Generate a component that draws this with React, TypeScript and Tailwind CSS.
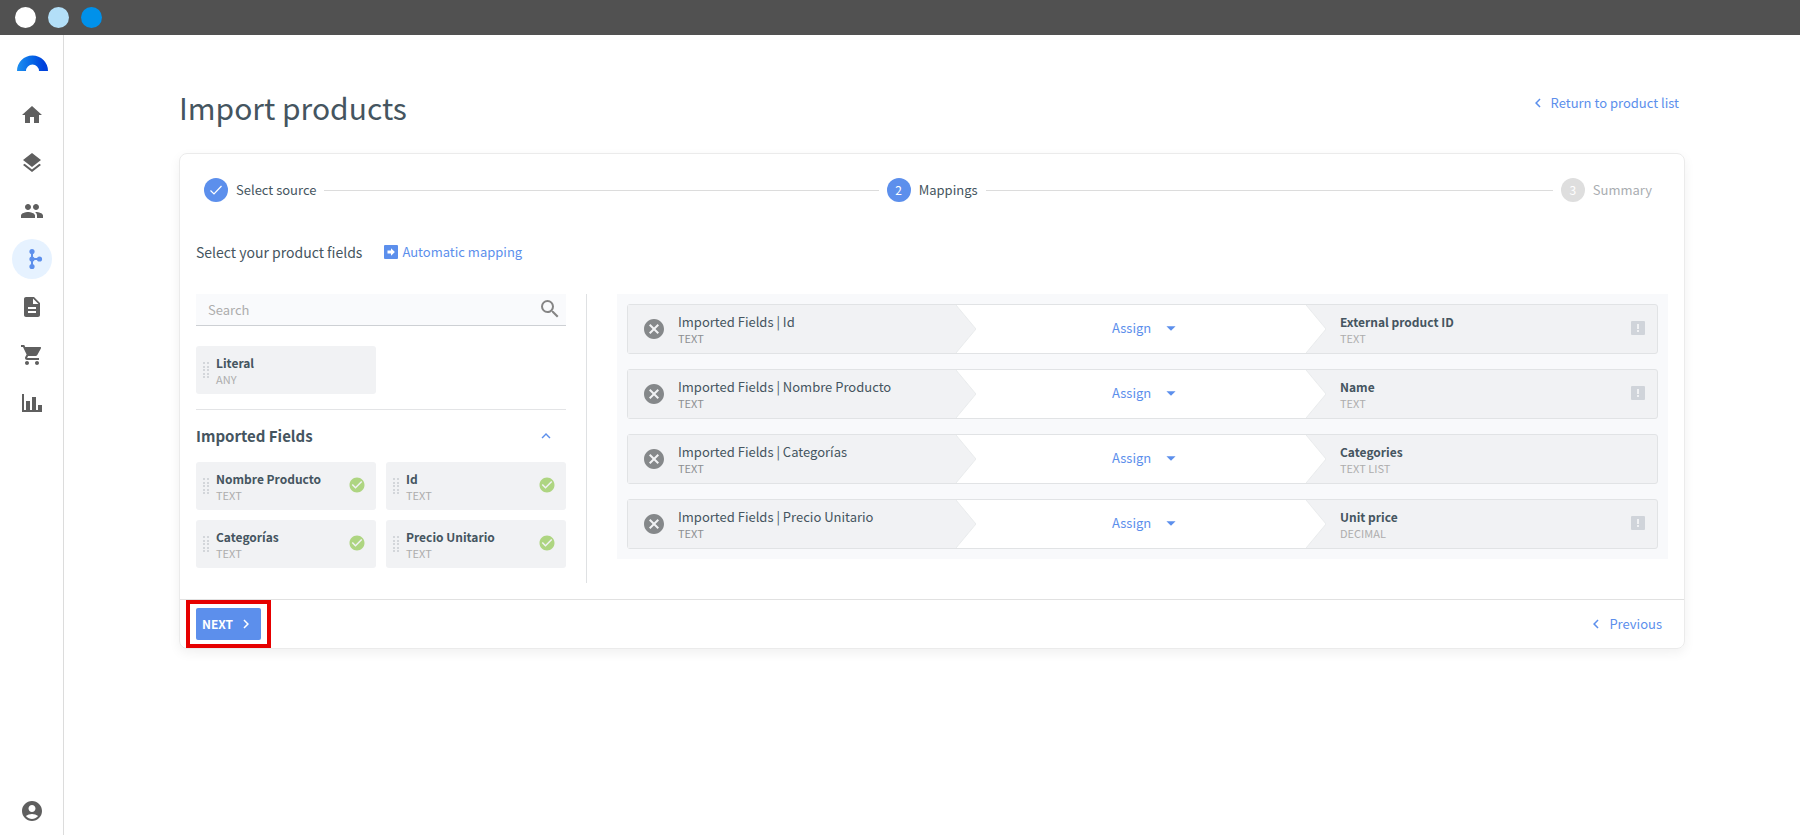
import React from "react";
import {
  MdAccountCircle,
  MdArrowDropDown,
  MdCancel,
  MdCheckCircle,
  MdChevronLeft,
  MdChevronRight,
  MdDescription,
  MdHome,
  MdKeyboardArrowUp,
  MdLayers,
  MdPeople,
  MdSearch,
  MdShoppingCart,
} from "react-icons/md";

type Field = { name: string; type: string; mapped?: boolean };
type Mapping = { source: string; target: string; type: string; required: boolean };

const importedFields: Field[] = [
  { name: "Nombre Producto", type: "TEXT", mapped: true },
  { name: "Id", type: "TEXT", mapped: true },
  { name: "Categorías", type: "TEXT", mapped: true },
  { name: "Precio Unitario", type: "TEXT", mapped: true },
];

const mappings: Mapping[] = [
  { source: "Id", target: "External product ID", type: "TEXT", required: true },
  { source: "Nombre Producto", target: "Name", type: "TEXT", required: true },
  { source: "Categorías", target: "Categories", type: "TEXT LIST", required: false },
  { source: "Precio Unitario", target: "Unit price", type: "DECIMAL", required: true },
];

function Logo() {
  return (
    <svg width="32" height="16" viewBox="0 0 32 16" aria-hidden="true">
      <defs>
        <linearGradient id="arc" x1="0" x2="1" y1="0" y2="0">
          <stop offset="0" stopColor="#1e90f0" />
          <stop offset="0.5" stopColor="#0565e6" />
          <stop offset="0.85" stopColor="#0042dc" />
        </linearGradient>
      </defs>
      <path d="M1 16a15.500 15.500 0 0 1 31 0h-9a6.500 6.500 0 0 0-13 0z" fill="url(#arc)" />
    </svg>
  );
}

function BranchIcon() {
  return (
    <svg width="24" height="24" viewBox="0 0 24 24" fill="currentColor" aria-hidden="true">
      <path d="M11 4.500h2V11h7v2h-7v6.500h-2z" />
      <circle cx="12" cy="4.500" r="2.600" />
      <circle cx="12" cy="12" r="2.600" />
      <circle cx="12" cy="19.500" r="2.600" />
      <circle cx="19.500" cy="12" r="2.600" />
    </svg>
  );
}

function ChartIcon() {
  return (
    <svg width="24" height="24" viewBox="0 0 24 24" fill="currentColor" aria-hidden="true">
      <path d="M2 3h2v16h2v-9h4v9h2V6h4v13h2v-5h4v7H2z" />
    </svg>
  );
}

function DragHandle() {
  return (
    <svg width="6" height="16" viewBox="0 0 6 16" fill="#d3d6da" aria-hidden="true">
      {[0, 4, 7, 11, 14].map((y) => (
        <g key={y}>
          <rect x="0" y={y} width="2" height="2" />
          <rect x="4" y={y} width="2" height="2" />
        </g>
      ))}
    </svg>
  );
}

function RequiredIcon() {
  return (
    <svg width="14" height="14" viewBox="0 0 14 14" role="img" aria-label="Required">
      <rect width="14" height="14" rx="1" fill="#d0d4da" />
      <path d="M6 3h2v5H6zM6 9h2v2H6z" fill="#f1f2f4" />
    </svg>
  );
}

function AutoIcon() {
  return (
    <svg width="14" height="14" viewBox="0 0 14 14" aria-hidden="true">
      <rect width="14" height="14" rx="1" fill="#5c8fec" />
      <path d="M3.500 5.500H7V3.300L10.900 7 7 10.700V8.500H3.500z" fill="#fff" />
    </svg>
  );
}

const navItems = [
  { label: "Home", icon: <MdHome size={24} /> },
  { label: "Catalog", icon: <MdLayers size={24} /> },
  { label: "Customers", icon: <MdPeople size={24} /> },
  { label: "Integrations", icon: <BranchIcon />, active: true },
  { label: "Documents", icon: <MdDescription size={24} /> },
  { label: "Orders", icon: <MdShoppingCart size={24} /> },
  { label: "Reports", icon: <ChartIcon /> },
];

function Sidebar() {
  return (
    <nav className="flex w-16 shrink-0 flex-col items-center border-r border-[#dcdcdc] pt-5 pb-1 text-[#5f5f5f]">
      <a href="#start" aria-label="Start" className="block h-4">
        <Logo />
      </a>
      <ul className="mt-6 flex flex-col gap-2">
        {navItems.map((item) => (
          <li key={item.label}>
            <a
              href="#nav"
              aria-label={item.label}
              className={
                item.active
                  ? "flex size-10 items-center justify-center rounded-full bg-[#e6f2ff] text-[#5c8fec]"
                  : "flex size-10 items-center justify-center rounded-full"
              }
            >
              {item.icon}
            </a>
          </li>
        ))}
      </ul>
      <a href="#account" aria-label="Account" className="mt-auto flex size-10 items-center justify-center">
        <MdAccountCircle size={24} />
      </a>
    </nav>
  );
}

function FieldCard({ field }: { field: Field }) {
  return (
    <div className="flex h-12 items-center rounded-[3px] bg-[#f1f2f4] pr-[10px] pl-[7px]">
      <DragHandle />
      <div className="ml-[7px] grow pt-0.5">
        <p className="text-[12px] leading-4 font-semibold">{field.name}</p>
        <p className="text-[11px] leading-4 text-[#adadad]">{field.type}</p>
      </div>
      {field.mapped && (
        <span className="pb-0.5">
          <MdCheckCircle size={18} className="text-[#aed581]" aria-label="Mapped" />
        </span>
      )}
    </div>
  );
}

function MappingRow({ mapping }: { mapping: Mapping }) {
  return (
    <li className="grid h-[50px] grid-cols-[348fr_350fr_331fr] rounded-[3px] border border-[#e1e3e5] bg-[#f1f2f4]">
      <div className="flex items-center bg-white">
        <div className="flex h-full grow items-center bg-[#f1f2f4] pl-[14px]">
          <button type="button" aria-label="Remove mapping" className="text-[#85888a]">
            <MdCancel size={24} />
          </button>
          <div className="ml-3 pt-0.5">
            <p className="text-[13px] leading-4">Imported Fields | {mapping.source}</p>
            <p className="text-[11px] leading-4 text-[#8c8f92]">TEXT</p>
          </div>
        </div>
        <svg width="20" height="48" viewBox="0 0 20 48" aria-hidden="true">
          <path d="M0 0l20 24L0 48z" fill="#f1f2f4" />
          <path d="M0 0l20 24L0 48" fill="none" stroke="#e6e8ea" strokeWidth="0.800" />
        </svg>
      </div>
      <div className="flex items-center bg-white">
        <div className="grid grow place-items-center pb-0.5">
          <label className="grid items-center text-[#5c8fec]">
            <select
              aria-label="Action"
              className="col-start-1 row-start-1 w-[78px] cursor-pointer appearance-none bg-transparent text-[13px] leading-5"
            >
              <option>Assign</option>
            </select>
            <MdArrowDropDown size={22} className="pointer-events-none col-start-1 row-start-1 mr-2 justify-self-end" />
          </label>
        </div>
        <svg width="20" height="48" viewBox="0 0 20 48" aria-hidden="true" className="-ml-5">
          <path d="M0 0h20v48H0l20-24z" fill="#f1f2f4" />
          <path d="M0 0l20 24L0 48" fill="none" stroke="#e6e8ea" strokeWidth="0.800" />
        </svg>
      </div>
      <div className="flex items-center pr-3 pl-[14px]">
        <div className="grow pt-0.5">
          <p className="text-[12px] leading-4 font-semibold">{mapping.target}</p>
          <p className="text-[11px] leading-4 text-[#adadad]">{mapping.type}</p>
        </div>
        {mapping.required && (
          <span className="pb-0.5">
            <RequiredIcon />
          </span>
        )}
      </div>
    </li>
  );
}

export default function App() {
  return (
    <div className="flex min-h-screen flex-col bg-white font-['Noto_Sans_CJK_JP',sans-serif] text-[#455560]">
      <header className="flex h-[35px] shrink-0 items-center gap-3 bg-[#515151] px-[15px]">
        <span className="size-[21px] rounded-full bg-white" />
        <span className="size-[21px] rounded-full bg-[#b3dff8]" />
        <span className="size-[21px] rounded-full bg-[#0091ea]" />
      </header>
      <div className="flex grow">
        <Sidebar />
        <main className="grow px-[115px] pt-12">
          <div className="flex items-start justify-between pr-[6px]">
            <h1 className="text-[30px] leading-[48px]">Import products</h1>
            <a href="#products" className="mt-[10px] flex items-center gap-1 text-[13px] leading-5 text-[#5c8fec]">
              <MdChevronLeft size={18} />
              Return to product list
            </a>
          </div>

          <section className="mt-[22px] rounded-lg border border-[#ebebeb] shadow-[0_4px_12px_rgba(0,0,0,0.06)]">
            <ol className="flex items-center gap-2 pt-6 pr-8 pl-6 text-[13px] leading-6">
              <li className="flex items-center gap-2">
                <span className="flex size-6 items-center justify-center rounded-full bg-[#5c8fec]">
                  <svg width="14" height="12" viewBox="0 0 14 12" fill="none" stroke="#fff" aria-hidden="true">
                    <path d="M1.500 6.500l3.500 3.500L12.500 2" strokeWidth="1.200" />
                  </svg>
                </span>
                Select source
              </li>
              <li aria-hidden="true" className="h-px grow-[558] bg-[#dcdcdc]" />
              <li aria-current="step" className="flex items-center gap-2">
                <span className="flex size-6 items-center justify-center rounded-full bg-[#5c8fec] text-[12px] text-white">2</span>
                Mappings
              </li>
              <li aria-hidden="true" className="h-px grow-[571] bg-[#dcdcdc]" />
              <li className="flex items-center gap-2 text-[#a9adb1]">
                <span className="flex size-6 items-center justify-center rounded-full bg-[#dedede] text-[12px] text-white">3</span>
                Summary
              </li>
            </ol>

            <div className="mt-[38px] flex h-6 items-center gap-[22px] px-4">
              <h2 className="text-[14px] leading-6">Select your product fields</h2>
              <button type="button" className="flex items-center gap-1 text-[13px] leading-5 text-[#5c8fec]">
                <AutoIcon />
                Automatic mapping
              </button>
            </div>

            <div className="mt-[30px] flex px-4 pb-4">
              <div className="flex w-[391px] shrink-0 flex-col border-r border-[#dfe1e3] pr-5 pb-[15px]">
                <label className="flex h-8 items-center border-b border-[#cdd0d4] bg-[#f9fafc] pr-1 pl-3 text-[#858585]">
                  <input
                    type="text"
                    placeholder="Search"
                    aria-label="Search"
                    className="min-w-0 grow bg-transparent text-[13px] leading-5 outline-none placeholder:text-[#adadad]"
                  />
                  <span className="pb-0.5">
                    <MdSearch size={24} />
                  </span>
                </label>
                <div className="mt-5 grid grid-cols-2 gap-[10px]">
                  <FieldCard field={{ name: "Literal", type: "ANY" }} />
                </div>
                <hr className="mt-[15px] border-[#e3e4e6]" />
                <div className="flex h-[52px] items-center justify-between pr-[11px]">
                  <h3 className="text-[15px] leading-6 font-semibold">Imported Fields</h3>
                  <button type="button" aria-label="Collapse imported fields" className="text-[#5c8fec]">
                    <MdKeyboardArrowUp size={18} />
                  </button>
                </div>
                <div className="grid grid-cols-2 gap-[10px]">
                  {importedFields.map((field) => (
                    <FieldCard key={field.name} field={field} />
                  ))}
                </div>
              </div>
              <ul className="ml-[30px] flex grow flex-col gap-[15px] self-start bg-[#f8f9fb] p-[10px]">
                {mappings.map((mapping) => (
                  <MappingRow key={mapping.target} mapping={mapping} />
                ))}
              </ul>
            </div>

            <footer className="flex h-[49px] items-center justify-between border-t border-[#e1e1e1] pr-[22px] pl-4">
              <div className="relative">
                <button
                  type="button"
                  className="flex h-8 items-center gap-1 rounded-xs bg-[#5c8fec] pr-[6px] pl-[6px] text-[12px] leading-5 font-bold text-white"
                >
                  NEXT
                  <MdChevronRight size={18} />
                </button>
                <span className="pointer-events-none absolute -inset-x-[10px] -inset-y-2 border-4 border-[#e60000]" />
              </div>
              <button type="button" className="flex items-center gap-1 text-[13px] leading-5 text-[#5c8fec]">
                <MdChevronLeft size={18} />
                Previous
              </button>
            </footer>
          </section>
        </main>
      </div>
    </div>
  );
}
